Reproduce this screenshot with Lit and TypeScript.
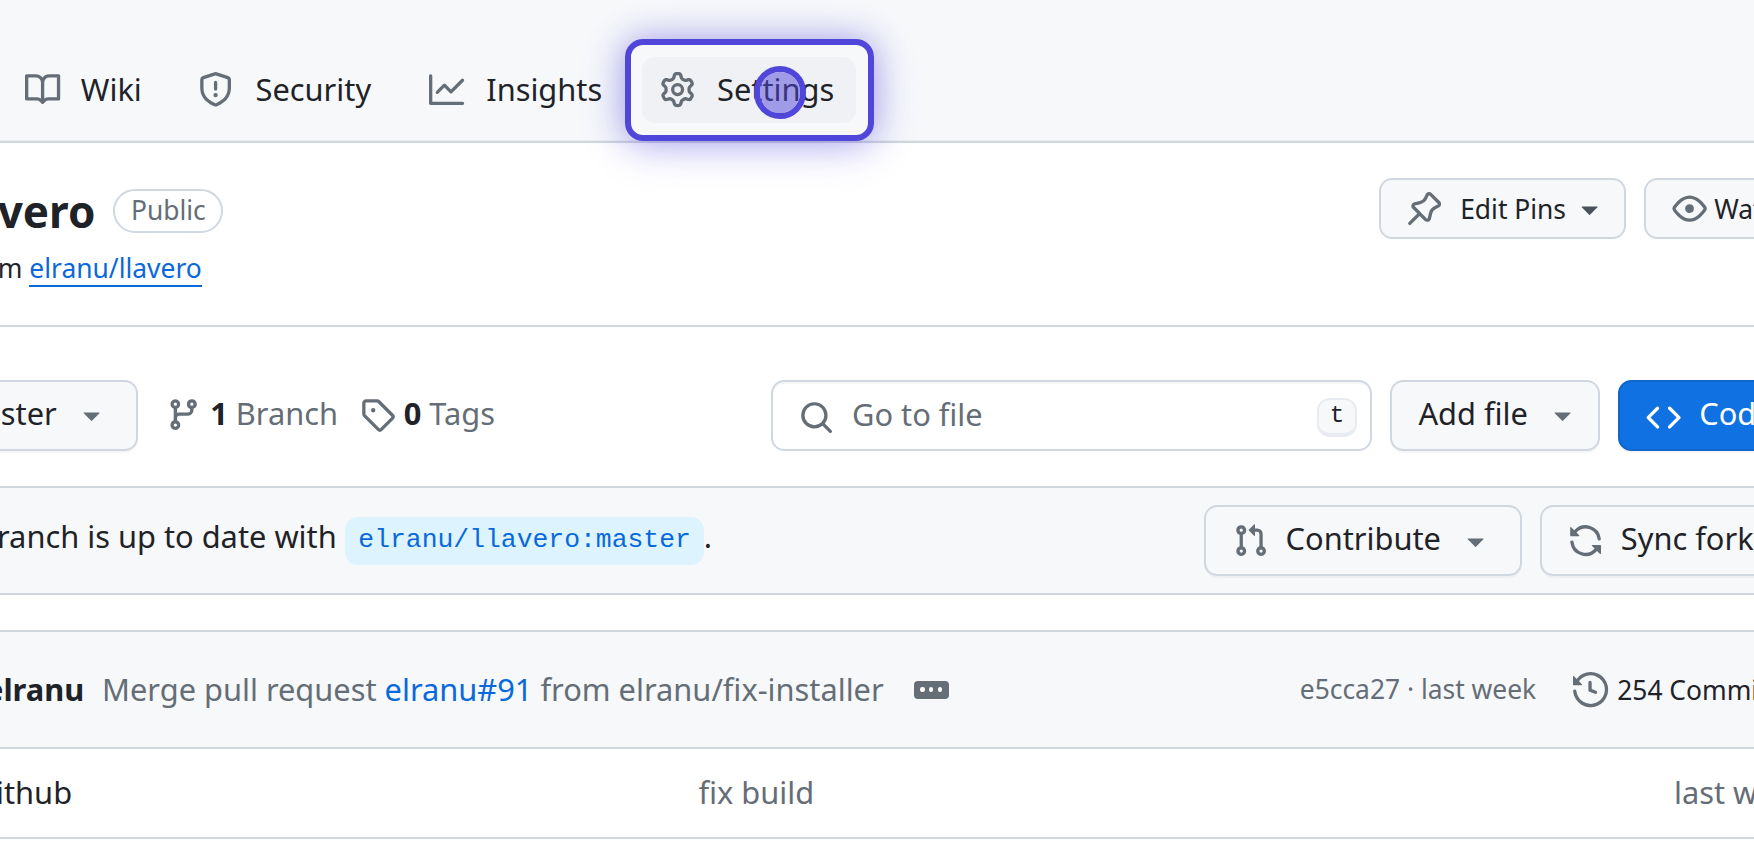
import { LitElement, html, css, svg } from "lit";
import { customElement, property } from "lit/decorators.js";

const PATHS: Record<string, string> = {
  book: "M0 1.75A.75.75 0 0 1 .75 1h4.253c1.227 0 2.317.59 3 1.501A3.743 3.743 0 0 1 11.006 1h4.245a.75.75 0 0 1 .75.75v10.5a.75.75 0 0 1-.75.75h-4.507a2.25 2.25 0 0 0-1.591.659l-.622.621a.75.75 0 0 1-1.06 0l-.622-.621A2.25 2.25 0 0 0 5.258 13H.75a.75.75 0 0 1-.75-.75Zm7.251 10.324.004-5.073-.002-2.253A2.25 2.25 0 0 0 5.003 2.5H1.5v9h3.757a3.75 3.75 0 0 1 1.994.574ZM8.755 4.75l-.004 7.322a3.752 3.752 0 0 1 1.992-.572H14.5v-9h-3.495a2.25 2.25 0 0 0-2.25 2.25Z",
  shield: "M7.467.133a1.748 1.748 0 0 1 1.066 0l5.25 1.68A1.75 1.75 0 0 1 15 3.48V7c0 1.566-.32 3.182-1.303 4.682-.983 1.498-2.585 2.813-5.032 3.855a1.697 1.697 0 0 1-1.33 0c-2.447-1.042-4.049-2.357-5.032-3.855C1.32 10.182 1 8.566 1 7V3.48a1.75 1.75 0 0 1 1.217-1.667Zm.61 1.429a.25.25 0 0 0-.153 0l-5.25 1.68a.25.25 0 0 0-.174.238V7c0 1.358.275 2.666 1.057 3.86.784 1.194 2.121 2.34 4.366 3.297a.196.196 0 0 0 .154 0c2.245-.956 3.582-2.104 4.366-3.298C13.225 9.666 13.5 8.36 13.5 7V3.48a.251.251 0 0 0-.174-.237l-5.25-1.68ZM8.75 4.75v3a.75.75 0 0 1-1.5 0v-3a.75.75 0 0 1 1.5 0ZM9 10.5a1 1 0 1 1-2 0 1 1 0 0 1 2 0Z",
  graph: "M1.5 1.75V13.5h13.75a.75.75 0 0 1 0 1.5H.75a.75.75 0 0 1-.75-.75V1.75a.75.75 0 0 1 1.5 0Zm14.28 2.53-5.25 5.25a.75.75 0 0 1-1.06 0L7 7.06 4.28 9.78a.751.751 0 0 1-1.042-.018.751.751 0 0 1-.018-1.042l3.25-3.25a.75.75 0 0 1 1.06 0L10 7.94l4.72-4.72a.751.751 0 0 1 1.042.018.751.751 0 0 1 .018 1.042Z",
  gear: "M8 0a8.2 8.2 0 0 1 .701.031C9.444.095 9.99.645 10.16 1.29l.288 1.107c.018.066.079.158.212.224.231.114.454.243.668.386.123.082.233.09.299.071l1.103-.303c.644-.176 1.392.021 1.82.63.27.385.506.792.704 1.218.315.675.111 1.422-.364 1.891l-.814.806c-.049.048-.098.147-.088.294.016.257.016.515 0 .772-.01.147.038.246.088.294l.814.806c.475.469.679 1.216.364 1.891a7.977 7.977 0 0 1-.704 1.217c-.428.61-1.176.807-1.82.63l-1.102-.302c-.067-.019-.177-.011-.3.071a5.909 5.909 0 0 1-.668.386c-.133.066-.194.158-.211.224l-.29 1.106c-.168.646-.715 1.196-1.458 1.26a8.006 8.006 0 0 1-1.402 0c-.743-.064-1.289-.614-1.458-1.26l-.289-1.106c-.018-.066-.079-.158-.212-.224a5.738 5.738 0 0 1-.668-.386c-.123-.082-.233-.09-.299-.071l-1.103.303c-.644.176-1.392-.021-1.82-.63a8.12 8.12 0 0 1-.704-1.218c-.315-.675-.111-1.422.363-1.891l.815-.806c.05-.048.098-.147.088-.294a6.214 6.214 0 0 1 0-.772c.01-.147-.038-.246-.088-.294l-.815-.806C.635 6.045.431 5.298.746 4.623a7.92 7.92 0 0 1 .704-1.217c.428-.61 1.176-.807 1.82-.63l1.102.302c.067.019.177.011.3-.071.214-.143.437-.272.668-.386.133-.066.194-.158.211-.224l.29-1.106C6.009.645 6.556.095 7.299.03 7.53.01 7.764 0 8 0Zm-.571 1.525c-.036.003-.108.036-.137.146l-.289 1.105c-.147.561-.549.967-.998 1.189-.173.086-.34.183-.5.29-.417.278-.97.423-1.529.27l-1.103-.303c-.109-.03-.175.016-.195.045-.22.312-.412.644-.573.99-.014.031-.021.11.059.19l.815.806c.411.406.562.957.53 1.456a4.709 4.709 0 0 0 0 .582c.032.499-.119 1.05-.53 1.456l-.815.806c-.081.08-.073.159-.059.19.162.346.353.677.573.989.02.03.085.076.195.046l1.102-.303c.56-.153 1.113-.008 1.53.27.161.107.328.204.501.29.447.222.85.629.997 1.189l.289 1.105c.029.109.101.143.137.146a6.6 6.6 0 0 0 1.142 0c.036-.003.108-.036.137-.146l.289-1.105c.147-.561.549-.967.998-1.189.173-.086.34-.183.5-.29.417-.278.97-.423 1.529-.27l1.103.303c.109.029.175-.016.195-.045.22-.313.411-.644.573-.99.014-.031.021-.11-.059-.19l-.815-.806c-.411-.406-.562-.957-.53-1.456a4.709 4.709 0 0 0 0-.582c-.032-.499.119-1.05.53-1.456l.815-.806c.081-.08.073-.159.059-.19a6.464 6.464 0 0 0-.573-.989c-.02-.03-.085-.076-.195-.046l-1.102.303c-.56.153-1.113.008-1.53-.27a4.44 4.44 0 0 0-.501-.29c-.447-.222-.85-.629-.997-1.189l-.289-1.105c-.029-.11-.101-.143-.137-.146a6.6 6.6 0 0 0-1.142 0ZM11 8a3 3 0 1 1-6 0 3 3 0 0 1 6 0ZM9.5 8a1.5 1.5 0 1 0-3.001.001A1.5 1.5 0 0 0 9.5 8Z",
  pin: "m11.294.984 3.722 3.722a1.75 1.75 0 0 1-.504 2.826l-1.327.613a3.089 3.089 0 0 0-1.707 2.084l-.584 2.454c-.317 1.332-1.972 1.8-2.94.832L5.75 11.311 1.78 15.28a.749.749 0 1 1-1.06-1.06l3.969-3.97-2.204-2.204c-.968-.968-.5-2.623.832-2.94l2.454-.584a3.08 3.08 0 0 0 2.084-1.707l.613-1.327a1.75 1.75 0 0 1 2.826-.504ZM6.283 9.723l2.732 2.731a.25.25 0 0 0 .42-.119l.584-2.454a4.586 4.586 0 0 1 2.537-3.098l1.328-.613a.25.25 0 0 0 .072-.404l-3.722-3.722a.25.25 0 0 0-.404.072l-.613 1.328a4.584 4.584 0 0 1-3.098 2.537l-2.454.584a.25.25 0 0 0-.119.42l2.731 2.732Z",
  eye: "M8 2c1.981 0 3.671.992 4.933 2.078 1.27 1.091 2.187 2.345 2.637 3.023a1.62 1.62 0 0 1 0 1.798c-.45.678-1.367 1.932-2.637 3.023C11.67 13.008 9.981 14 8 14c-1.981 0-3.671-.992-4.933-2.078C1.797 10.83.88 9.576.43 8.898a1.62 1.62 0 0 1 0-1.798c.45-.677 1.367-1.931 2.637-3.022C4.33 2.992 6.019 2 8 2ZM1.679 7.932a.12.12 0 0 0 0 .136c.411.622 1.241 1.75 2.366 2.717C5.176 11.758 6.527 12.5 8 12.5c1.473 0 2.825-.742 3.955-1.715 1.124-.967 1.954-2.096 2.366-2.717a.12.12 0 0 0 0-.136c-.412-.621-1.242-1.75-2.366-2.717C10.824 4.242 9.473 3.5 8 3.5c-1.473 0-2.825.742-3.955 1.715-1.124.967-1.954 2.096-2.366 2.717ZM8 10a2 2 0 1 1-.001-3.999A2 2 0 0 1 8 10Z",
  branch: "M9.5 3.25a2.25 2.25 0 1 1 3 2.122V6A2.5 2.5 0 0 1 10 8.5H6a1 1 0 0 0-1 1v1.128a2.251 2.251 0 1 1-1.5 0V5.372a2.25 2.25 0 1 1 1.5 0v1.836A2.493 2.493 0 0 1 6 7h4a1 1 0 0 0 1-1v-.628A2.25 2.25 0 0 1 9.5 3.25Zm-6 0a.75.75 0 1 0 1.5 0 .75.75 0 0 0-1.5 0Zm8.25-.75a.75.75 0 1 0 0 1.5.75.75 0 0 0 0-1.5ZM4.25 12a.75.75 0 1 0 0 1.5.75.75 0 0 0 0-1.5Z",
  tag: "M1 7.775V2.75C1 1.784 1.784 1 2.75 1h5.025c.464 0 .91.184 1.238.513l6.25 6.25a1.75 1.75 0 0 1 0 2.474l-5.026 5.026a1.75 1.75 0 0 1-2.474 0l-6.25-6.25A1.752 1.752 0 0 1 1 7.775Zm1.5 0c0 .066.026.13.073.177l6.25 6.25a.25.25 0 0 0 .354 0l5.025-5.025a.25.25 0 0 0 0-.354l-6.25-6.25a.25.25 0 0 0-.177-.073H2.75a.25.25 0 0 0-.25.25ZM6 5a1 1 0 1 1 0 2 1 1 0 0 1 0-2Z",
  search: "M10.68 11.74a6 6 0 0 1-7.922-8.982 6 6 0 0 1 8.982 7.922l3.04 3.04a.749.749 0 0 1-.326 1.275.749.749 0 0 1-.734-.215ZM11.5 7a4.499 4.499 0 1 0-8.997 0A4.499 4.499 0 0 0 11.5 7Z",
  code: "m11.28 3.22 4.25 4.25a.75.75 0 0 1 0 1.06l-4.25 4.25a.749.749 0 0 1-1.275-.326.749.749 0 0 1 .215-.734L13.94 8l-3.72-3.72a.749.749 0 0 1 .326-1.275.749.749 0 0 1 .734.215Zm-6.56 0a.751.751 0 0 1 1.042.018.751.751 0 0 1 .018 1.042L2.06 8l3.72 3.72a.749.749 0 0 1-.326 1.275.749.749 0 0 1-.734-.215L.47 8.53a.75.75 0 0 1 0-1.06Z",
  pull: "M1.5 3.25a2.25 2.25 0 1 1 3 2.122v5.256a2.251 2.251 0 1 1-1.5 0V5.372A2.25 2.25 0 0 1 1.5 3.25Zm5.677-.177L9.573.677A.25.25 0 0 1 10 .854V2.5h1A2.5 2.5 0 0 1 13.5 5v5.628a2.251 2.251 0 1 1-1.5 0V5a1 1 0 0 0-1-1h-1v1.646a.25.25 0 0 1-.427.177L7.177 3.427a.25.25 0 0 1 0-.354ZM3.75 2.5a.75.75 0 1 0 0 1.5.75.75 0 0 0 0-1.5Zm0 9.5a.75.75 0 1 0 0 1.5.75.75 0 0 0 0-1.5Zm8.25.75a.75.75 0 1 0 1.5 0 .75.75 0 0 0-1.5 0Z",
  sync: "M1.705 8.005a.75.75 0 0 1 .834.656 5.5 5.5 0 0 0 9.592 2.97l-1.204-1.204a.25.25 0 0 1 .177-.427h3.646a.25.25 0 0 1 .25.25v3.646a.25.25 0 0 1-.427.177l-1.38-1.38A7.002 7.002 0 0 1 1.05 8.84a.75.75 0 0 1 .656-.834ZM8 2.5a5.487 5.487 0 0 0-4.131 1.869l1.204 1.204A.25.25 0 0 1 4.896 6H1.25A.25.25 0 0 1 1 5.75V2.104a.25.25 0 0 1 .427-.177l1.38 1.38A7.002 7.002 0 0 1 14.95 7.16a.75.75 0 0 1-1.49.178A5.5 5.5 0 0 0 8 2.5Z",
  history: "m.427 1.927 1.215 1.215a8.002 8.002 0 1 1-1.6 5.685.75.75 0 1 1 1.493-.154 6.5 6.5 0 1 0 1.18-4.458l1.358 1.358A.25.25 0 0 1 3.896 6H.25A.25.25 0 0 1 0 5.75V2.104a.25.25 0 0 1 .427-.177ZM7.75 4a.75.75 0 0 1 .75.75v2.992l2.028.812a.75.75 0 0 1-.557 1.392l-2.5-1A.751.751 0 0 1 7 8.25v-3.5A.75.75 0 0 1 7.75 4Z",
  caret: "m4.427 7.427 3.396 3.396a.25.25 0 0 0 .354 0l3.396-3.396A.25.25 0 0 0 11.396 7H4.604a.25.25 0 0 0-.177.427Z",
};

@customElement("oct-icon")
export class OctIcon extends LitElement {
  @property() name = "";
  static styles = css`
    :host { display: block; flex: none; width: 35.2px; height: 35.2px; color: #656d76; }
    .glyph { display: block; width: 100%; height: 100%; fill: currentColor; overflow: visible; }
  `;
  render() {
    return html`<svg class="glyph" viewBox="0 0 16 16">${svg`<path d=${PATHS[this.name]}></path>`}</svg>`;
  }
}

@customElement("app-root")
export class AppRoot extends LitElement {
  static styles = css`
    :host {
      display: block; width: 1754px; height: 846px; overflow: hidden; background: #fff;
      font-family: "Noto Sans", sans-serif; font-size: 30.8px; line-height: 44px;
      color: #1f2328;
    }
    * { box-sizing: border-box; }
    span { white-space: pre; }
    .muted { color: #656d76; }
    .link { color: #0969da; }
    .strong { font-weight: 700; }
    .small { font-size: 26.4px; }

    .nav {
      display: flex; gap: 17.8px; height: 143px; padding: 57px 0 0 7.3px;
      background: #f6f8fa; border-bottom: 2px solid #d0d7de; box-shadow: inset 0 -1px #e9edf1;
    }
    .tab {
      position: relative; display: flex; align-items: center; gap: 17.6px;
      height: 66px; padding: 0 17.6px; border-radius: 13px;
    }
    .tab.active { background: #eff1f4; }
    .label { display: flex; flex-direction: column; align-items: center; padding-bottom: 2px; }
    .label::after { content: attr(data-text); height: 0; overflow: hidden; visibility: hidden; font-weight: 700; }
    .ring {
      position: absolute; left: -17px; top: -18px; width: 249px; height: 102px;
      border: 6px solid #5046da; border-radius: 18px;
      box-shadow: 0 0 32px rgba(80, 70, 218, 0.4), 0 6px 48px rgba(80, 70, 218, 0.2);
    }
    .pointer {
      position: absolute; left: 111.7px; top: 9px; width: 52.6px; height: 52.6px;
      border: 6px solid #5046da; border-radius: 50%; background: rgba(80, 70, 218, 0.5); background-clip: padding-box;
    }

    .head { display: flex; justify-content: space-between; height: 184px; border-bottom: 2px solid #d0d7de; padding-top: 35px; }
    .title { display: flex; align-items: flex-start; gap: 18px; padding-top: 11px; height: 76px; }
    .name { font-size: 44px; margin-left: -2.3px; }
    .pill {
      height: 44px; width: 110px; border: 2px solid #d0d7de; border-radius: 22px;
      text-align: center; line-height: 38px; color: #656d76;
    }
    .fork { line-height: 36px; margin-top: -4px; margin-left: -2.2px; white-space: pre; }
    .fork .link { display: inline-block; height: 34px; line-height: 31px; border-bottom: 2px solid #0969da; }
    .head-actions { display: flex; gap: 18px; width: 375px; }
    .btn {
      display: flex; align-items: center; flex: none; height: 71px; background: #f6f8fa;
      border: 2px solid #d0d7de; border-radius: 13.3px; box-shadow: 0 2px 1px rgba(31, 35, 40, 0.04);
    }
    .btn .txt { padding-bottom: 5px; }
    .btn.sm { height: 61px; box-shadow: none; }
    .btn.sm .txt { padding-bottom: 0; }
    .pins { width: 247px; padding-left: 26px; gap: 18px; }
    .pins .drop { color: #4b5259; margin-left: -11.7px; }
    .watch { width: 140px; padding-left: 26px; gap: 7px; }

    .toolbar { display: flex; align-items: center; height: 159px; padding-top: 18.5px; padding-bottom: 1.5px; overflow: hidden; }
    .toolbar > * { flex: none; }
    .ref { width: 138px; border-left: 0; border-radius: 0 13.3px 13.3px 0; }
    .ref .txt { width: 74px; padding-left: 0.8px; }
    .stat { display: flex; align-items: center; }
    .stat .txt { padding-bottom: 5px; }
    .branches { margin-left: 28.2px; width: 194px; gap: 8.8px; }
    .tags { gap: 8.3px; width: 410.8px; }
    .search {
      display: flex; align-items: center; width: 601px; height: 71px; padding: 0 13px 0 25.8px;
      border: 2px solid #d0d7de; border-radius: 13.3px; box-shadow: inset 0 2px 1px rgba(31, 35, 40, 0.04);
    }
    .search .muted { flex: 1; padding: 0 0 2px 18px; }
    .low { margin-top: 5.5px; }
    .key {
      width: 40px; height: 39px; margin-top: 4px; border: 2px solid #e8ebef; border-bottom-width: 4px;
      border-radius: 13px; background: #f6f8fa; text-align: center;
      font-family: "Liberation Mono", monospace; font-size: 24.2px; line-height: 32px;
    }
    .add { width: 210px; margin-left: 18px; padding-left: 26.4px; gap: 17.4px; }
    .code { width: 160px; margin-left: 18px; padding-left: 26px; gap: 18px; background: #1071e2; border-color: #0f66cb; color: #fff; }
    .code oct-icon { color: #fff; }

    .sync { display: flex; align-items: center; height: 109px; background: #f6f8fa; border: solid #d0d7de; border-width: 2px 0; }
    .status { flex: 1; display: flex; align-items: center; }
    .status .txt { padding-bottom: 9px; width: 345px; margin-left: -3px; }
    .status .dot { padding-bottom: 9px; margin-left: -0.5px; }
    .chip {
      height: 48px; margin-left: 3px; padding: 0 13.3px; border-radius: 13px; background: #ddf4ff;
      font-family: "Liberation Mono", monospace; font-size: 26.4px; line-height: 46px;
    }
    .contribute { width: 318px; padding-left: 26.8px; gap: 17.6px; }
    .contribute .drop { margin-left: -0.6px; }
    .syncfork { width: 250px; margin: 0 -36px 0 18px; padding-left: 26px; gap: 17.6px; }

    .commit { display: flex; align-items: center; height: 119px; margin-top: 35px; background: #f6f8fa; border: solid #d0d7de; border-width: 2px 0; }
    .author { width: 117px; margin-left: -15px; padding-bottom: 2px; }
    .message { flex: 1; display: flex; align-items: center; }
    .subject { padding-bottom: 2px; }
    .more { display: flex; align-items: center; justify-content: center; gap: 4.5px; width: 35px; height: 18px; margin-left: 30px; border-radius: 4px; background: #656d76; }
    .bead { width: 4.4px; height: 4.4px; border-radius: 50%; background: #fff; }
    .hash { width: 274px; padding-bottom: 1px; padding-left: 0.8px; }
    .commits { display: flex; align-items: center; gap: 9px; width: 181px; }

    .row { display: grid; grid-template-columns: 698.5px 975.5px 80px; align-items: center; height: 90px; padding-bottom: 2px; border-bottom: 2px solid #d0d7de; overflow: hidden; }
    .file { margin-left: -4px; }
  `;

  private tab(icon: string, text: string, active = false) {
    return html`<div class="tab ${active ? "active" : ""}"><oct-icon name=${icon}></oct-icon><span class="label" data-text=${text}>${text}</span>${active ? html`<div class="ring"></div><div class="pointer"></div>` : ""}</div>`;
  }

  render() {
    return html`
      <nav class="nav">${this.tab("book", "Wiki")}${this.tab("shield", "Security")}${this.tab("graph", "Insights")}${this.tab("gear", "Settings", true)}</nav>
      <header class="head">
        <div>
          <div class="title"><span class="name strong">vero</span><span class="pill small">Public</span></div>
          <div class="fork small">m <span class="link">elranu/llavero</span></div>
        </div>
        <div class="head-actions">
          <div class="btn sm pins small"><oct-icon name="pin"></oct-icon><span class="txt">Edit Pins</span><oct-icon class="drop" name="caret"></oct-icon></div>
          <div class="btn sm watch small"><oct-icon name="eye"></oct-icon><span class="txt">Wat</span></div>
        </div>
      </header>
      <section class="toolbar">
        <div class="btn ref"><span class="txt">ster</span><oct-icon name="caret"></oct-icon></div>
        <div class="stat branches"><oct-icon name="branch"></oct-icon><span class="txt"><b class="strong">1</b><span class="muted"> Branch</span></span></div>
        <div class="stat tags"><oct-icon name="tag"></oct-icon><span class="txt"><b class="strong">0</b><span class="muted"> Tags</span></span></div>
        <div class="search"><oct-icon class="low" name="search"></oct-icon><span class="muted">Go to file</span><span class="key">t</span></div>
        <div class="btn add"><span class="txt">Add file</span><oct-icon name="caret"></oct-icon></div>
        <div class="btn code"><oct-icon class="low" name="code"></oct-icon><span class="txt">Code</span></div>
      </section>
      <section class="sync">
        <div class="status"><span class="txt">ranch is up to date with</span><span class="chip link">elranu/llavero:master</span><span class="dot">.</span></div>
        <div class="btn contribute"><oct-icon name="pull"></oct-icon><span class="txt">Contribute</span><oct-icon class="drop" name="caret"></oct-icon></div>
        <div class="btn syncfork"><oct-icon name="sync"></oct-icon><span class="txt">Sync fork</span></div>
      </section>
      <section class="commit">
        <span class="author strong">elranu</span>
        <div class="message muted"><span class="subject">Merge pull request <span class="link">elranu#91</span> from elranu/fix-installer</span><span class="more"><i class="bead"></i><i class="bead"></i><i class="bead"></i></span></div>
        <span class="hash small muted">e5cca27 · last week</span>
        <div class="commits small"><oct-icon name="history"></oct-icon><span>254 Commits</span></div>
      </section>
      <div class="row"><span class="file">ithub</span><span class="muted">fix build</span><span class="muted">last week</span></div>
    `;
  }
}
